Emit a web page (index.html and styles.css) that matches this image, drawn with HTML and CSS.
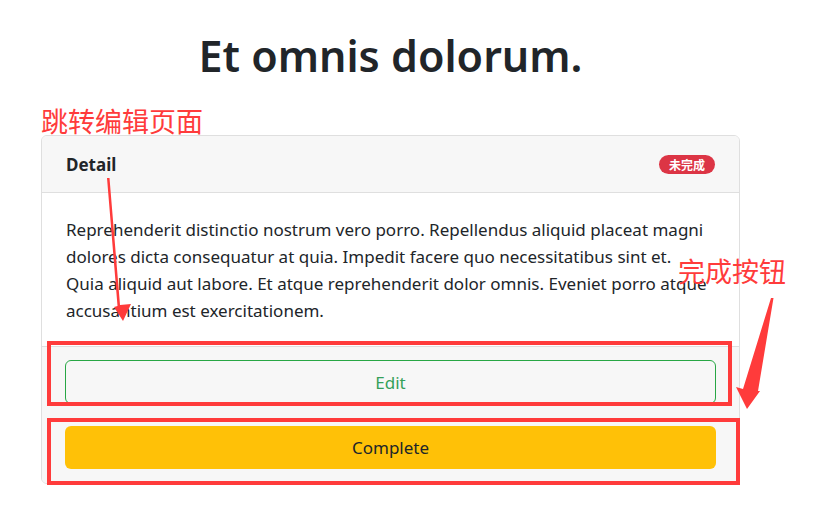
FILE: index.html
```html
<!DOCTYPE html>
<html lang="zh">
<head>
<meta charset="utf-8">
<title>Detail</title>
<link rel="stylesheet" href="styles.css">
</head>
<body>
<div class="container">
  <h1 class="title">Et omnis dolorum.</h1>
  <div class="card">
    <div class="card-header">
      <span class="card-title">Detail</span>
      <span class="badge">未完成</span>
    </div>
    <div class="card-body">
      <p>Reprehenderit distinctio nostrum vero porro. Repellendus aliquid placeat magni dolores dicta consequatur at quia. Impedit facere quo necessitatibus sint et. Quia aliquid aut labore. Et atque reprehenderit dolor omnis. Eveniet porro atque accusantium est exercitationem.</p>
    </div>
    <div class="card-footer">
      <button class="btn btn-edit">Edit</button>
      <button class="btn btn-complete">Complete</button>
    </div>
  </div>
</div>

<div class="note note-edit">跳转编辑页面</div>
<div class="note note-complete">完成按钮</div>
<div class="box box-edit"></div>
<div class="box box-complete"></div>
<svg class="arrows" width="814" height="520" viewBox="0 0 814 520">
  <polygon fill="#ff3b3b" points="107,178 109.5,178 120,305 131,304 123,321 114,307 117.5,306"/>
  <polygon fill="#ff3b3b" points="771,298 773.5,298 758,391 760,391 747,409 736,387 743,389"/>
</svg>
</body>
</html>
```
FILE: styles.css
```css
html, body {
  margin: 0;
  padding: 0;
  background: #ffffff;
}
body {
  font-family: "Noto Sans", "Noto Sans CJK SC", sans-serif;
  color: #212529;
  width: 814px;
  height: 520px;
  overflow: hidden;
  position: relative;
}
.container {
  margin-left: 41px;
  width: 699px;
  padding-top: 24px;
}
.title {
  margin: 0 0 47px 0;
  text-align: center;
  font-size: 43px;
  font-weight: 600;
  line-height: 64px;
  color: #212529;
}
.card {
  border: 1px solid #dfdfdf;
  border-radius: 6px;
  overflow: hidden;
  background: #fff;
}
.card-header {
  display: flex;
  align-items: center;
  justify-content: space-between;
  padding: 16px 24px;
  height: 24px;
  background: #f7f7f7;
  border-bottom: 1px solid #dfdfdf;
}
.card-title {
  font-weight: 700;
  font-size: 17px;
}
.badge {
  background: #dc3545;
  color: #fff;
  font-weight: 700;
  font-size: 12px;
  line-height: 19px;
  padding: 0 10px;
  border-radius: 10px;
  font-family: "Noto Sans CJK SC", sans-serif;
}
.card-body {
  padding: 23px 32px 22px 24px;
}
.card-body p {
  margin: 0;
  font-size: 17px;
  line-height: 27px;
}
.card-footer {
  background: #f7f7f7;
  border-top: 1px solid #dfdfdf;
  padding: 13px 23px 14px;
  display: flex;
  flex-direction: column;
  gap: 22px;
}
.btn {
  font-family: inherit;
  font-size: 17px;
  border-radius: 6px;
  width: 100%;
  cursor: pointer;
}
.btn-edit {
  height: 44px;
  background: transparent;
  border: 1px solid #28a745;
  color: #35a05a;
}
.btn-complete {
  height: 43px;
  background: #ffc107;
  border: none;
  color: #212529;
}
.note {
  position: absolute;
  color: #ff3b3b;
  font-family: "Noto Sans CJK SC", sans-serif;
  font-size: 27px;
  line-height: 30px;
  white-space: nowrap;
}
.note-edit {
  left: 41px;
  top: 106px;
}
.note-complete {
  left: 678px;
  top: 256px;
}
.box {
  position: absolute;
  border: 4px solid #ff3b3b;
  box-sizing: border-box;
}
.box-edit {
  left: 47px;
  top: 341px;
  width: 685px;
  height: 65px;
}
.box-complete {
  left: 47px;
  top: 418px;
  width: 693px;
  height: 67px;
}
.arrows {
  position: absolute;
  left: 0;
  top: 0;
  pointer-events: none;
}
```
